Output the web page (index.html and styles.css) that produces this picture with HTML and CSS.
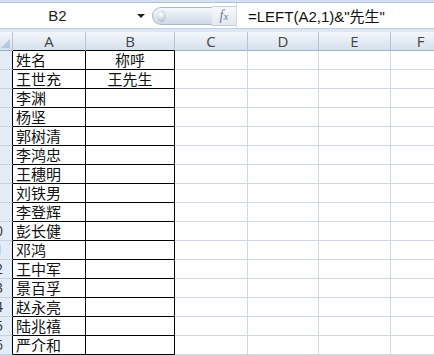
FILE: index.html
```html
<!DOCTYPE html>
<html lang="zh-CN">

<head>
    <meta charset="UTF-8">
    <title>Excel</title>
    <link rel="stylesheet" href="styles.css">
</head>

<body>
    <div class="ribbon-edge"></div>
    <div class="formula-bar">
        <div class="name-box">
            <span class="name-text">B2</span>
            <span class="name-arrow"></span>
        </div>
        <div class="splitter"><span class="knob"></span></div>
        <div class="fx"><i>f</i><span class="fx-x">x</span></div>
        <div class="formula-input">=LEFT(A2,1)&amp;"先生"</div>
    </div>
    <div class="bar-gap"></div>

    <div class="sheet" id="sheet">
        <div class="corner"></div>
        <div class="col-head edge">A</div>
        <div class="col-head edge">B</div>
        <div class="col-head">C</div>
        <div class="col-head">D</div>
        <div class="col-head">E</div>
        <div class="col-head">F</div>
    </div>

    <script>
        const names = ['姓名', '王世充', '李渊', '杨坚', '郭树清', '李鸿忠', '王穗明', '刘铁男',
            '李登辉', '彭长健', '邓鸿', '王中军', '景百孚', '赵永亮', '陆兆禧', '严介和'];
        const calls = { 0: '称呼', 1: '王先生' };
        const sheet = document.getElementById('sheet');

        names.forEach((name, i) => {
            let html = `<div class="row-head"><span>${i + 1}</span></div>`;
            html += `<div class="cell box">${name}</div>`;
            html += `<div class="cell box center">${calls[i] || ''}</div>`;
            html += '<div class="cell"></div>'.repeat(4);
            sheet.insertAdjacentHTML('beforeend', html);
        });
    </script>
</body>

</html>
```

FILE: styles.css
```css
body {
    margin: 0;
    width: 434px;
    height: 355px;
    overflow: hidden;
    background-color: #fff;
    font-family: "Liberation Sans", "Noto Sans CJK SC", sans-serif;
}

.ribbon-edge {
    height: 2px;
    background-color: #d5e1f1;
    border-bottom: 1px solid #b0c4de;
}

.formula-bar {
    display: flex;
    align-items: center;
    height: 25px;
    background-color: #fff;
}

.name-box {
    width: 152px;
    height: 100%;
    display: flex;
    align-items: center;
}

.name-text {
    width: 115px;
    text-align: center;
    font-size: 15px;
    color: #222;
}

.name-arrow {
    margin-left: 22px;
    width: 0;
    height: 0;
    border-left: 4px solid transparent;
    border-right: 4px solid transparent;
    border-top: 4px solid #222;
}

.splitter {
    width: 60px;
    height: 18px;
    border-radius: 9px 0 0 9px;
    border: 1px solid #a9b8cc;
    border-right: none;
    background: linear-gradient(#f7f9fc, #dfe6ef 55%, #cfd9e6);
    display: flex;
    align-items: center;
    padding-left: 4px;
    box-sizing: border-box;
}

.knob {
    width: 9px;
    height: 12px;
    border-radius: 50%;
    background: radial-gradient(circle at 40% 35%, #ffffff, #b4c0ce 80%);
}

.fx {
    width: 24px;
    text-align: center;
    font-family: "Liberation Serif", serif;
    font-size: 14px;
    color: #6f7c8c;
    background: linear-gradient(#f6f8fb, #e3e9f1);
    height: 18px;
    line-height: 18px;
    border-top: 1px solid #c3cedc;
    border-bottom: 1px solid #c3cedc;
}

.fx-x {
    font-style: italic;
    font-size: 11px;
}

.formula-input {
    flex: 1;
    height: 100%;
    display: flex;
    align-items: center;
    padding-left: 11px;
    font-size: 15px;
    color: #111;
    border-left: 1px solid #d4dbe5;
}

.bar-gap {
    height: 3px;
    background-color: #dde7f3;
    border-top: 1px solid #c4d1e2;
}

.sheet {
    display: grid;
    grid-template-columns: 13px 73px 89px 73px 71px 72px 60px;
    grid-auto-rows: 19px;
}

.corner,
.col-head,
.row-head {
    box-sizing: border-box;
    background: linear-gradient(#f4f7fb, #e2e9f3 60%, #d7e0ec);
    border-right: 1px solid #b6c5d8;
    border-bottom: 1px solid #9eb2cb;
}

.corner {
    position: relative;
}

.corner::after {
    content: '';
    position: absolute;
    right: 2px;
    bottom: 2px;
    border-left: 9px solid transparent;
    border-bottom: 9px solid #b9c8da;
}

.col-head {
    text-align: center;
    font-family: "Open Sans", "Liberation Sans", sans-serif;
    font-size: 15px;
    line-height: 18px;
    color: #444;
}

.col-head.edge {
    border-bottom-color: #000;
}

/* row numbers sit mostly off-screen, only wide ones peek in */
.row-head {
    background: #e4ecf7;
    border-bottom: 1px solid #c7d3e3;
    border-right: 1px solid #000;
    overflow: hidden;
    font-family: "Open Sans", "Liberation Sans", sans-serif;
    font-size: 14px;
    line-height: 18px;
    color: #333;
}

.row-head span {
    display: block;
    width: 30px;
    margin-left: -20px;
    text-align: center;
}

.cell {
    box-sizing: border-box;
    border-right: 1px solid #d0d7e5;
    border-bottom: 1px solid #d0d7e5;
    font-family: "Noto Sans CJK SC", sans-serif;
    font-size: 15px;
    line-height: 18px;
    color: #111;
    padding-left: 3px;
    white-space: nowrap;
}

.cell.box {
    border-right-color: #000;
    border-bottom-color: #000;
}

.cell.center {
    text-align: center;
    padding-left: 0;
}
```
